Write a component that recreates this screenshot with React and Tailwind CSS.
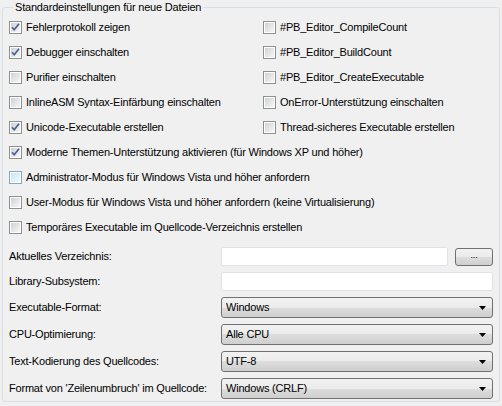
import React from 'react';

const TOP_ROWS = [
  [{ label: 'Fehlerprotokoll zeigen', checked: true }, { label: '#PB_Editor_CompileCount' }],
  [{ label: 'Debugger einschalten', checked: true }, { label: '#PB_Editor_BuildCount' }],
  [{ label: 'Purifier einschalten' }, { label: '#PB_Editor_CreateExecutable' }],
  [{ label: 'InlineASM Syntax-Einfärbung einschalten' }, { label: 'OnError-Unterstützung einschalten' }],
  [{ label: 'Unicode-Executable erstellen', checked: true }, { label: 'Thread-sicheres Executable erstellen' }],
];

const WIDE_ROWS = [
  { label: 'Moderne Themen-Unterstützung aktivieren (für Windows XP und höher)', checked: true },
  { label: 'Administrator-Modus für Windows Vista und höher anfordern', hover: true },
  { label: 'User-Modus für Windows Vista und höher anfordern (keine Virtualisierung)' },
  { label: 'Temporäres Executable im Quellcode-Verzeichnis erstellen' },
];

const COMBOS = [
  { label: 'Executable-Format:', value: 'Windows' },
  { label: 'CPU-Optimierung:', value: 'Alle CPU' },
  { label: 'Text-Kodierung des Quellcodes:', value: 'UTF-8' },
  { label: "Format von 'Zeilenumbruch' im Quellcode:", value: 'Windows (CRLF)' },
];

function CheckBox({ checked, hover }) {
  return (
    <svg width="13" height="13" viewBox="0 0 13 13" className="shrink-0">
      <defs>
        <linearGradient id="cbFill" x1="0" y1="0" x2="1" y2="1">
          <stop offset="0" stopColor="#cfd1d4" />
          <stop offset="1" stopColor="#f7f7f7" />
        </linearGradient>
        <linearGradient id="cbHover" x1="0" y1="0" x2="1" y2="1">
          <stop offset="0" stopColor="#c9e3f3" />
          <stop offset="1" stopColor="#f2f9fd" />
        </linearGradient>
      </defs>
      <rect x="0.5" y="0.5" width="12" height="12" fill="#fff" stroke={hover ? '#86a7c4' : '#8e8f8f'} />
      <rect x="2" y="2" width="9" height="9" fill={hover ? 'url(#cbHover)' : 'url(#cbFill)'} />
      {checked && (
        <path d="M3 6.2 L5.2 8.8 L10 2.8" fill="none" stroke="#4a5f96" strokeWidth="1.7" strokeLinejoin="round" />
      )}
    </svg>
  );
}

function Check({ label, checked, hover }) {
  return (
    <div className="h-[25px] flex items-center gap-[4px] whitespace-nowrap">
      <CheckBox checked={checked} hover={hover} />
      <span>{label}</span>
    </div>
  );
}

function Combo({ value }) {
  return (
    <div className="h-[21px] flex-1 flex items-center justify-between pl-[4px] pr-[6px] rounded-[3px] border border-[#707070] bg-[linear-gradient(#f2f2f2_0%,#ebebeb_50%,#dddddd_50%,#cfcfcf_100%)]">
      <span>{value}</span>
      <svg width="7" height="4" viewBox="0 0 7 4">
        <polygon points="0,0 7,0 3.5,4" fill="#000" />
      </svg>
    </div>
  );
}

export default function App() {
  return (
    <div className="w-[502px] h-[406px] bg-[#f0f0f0] px-[2px] pb-[4px] text-[11px] tracking-[-0.2px] text-black font-['Liberation_Sans',Arial,sans-serif] overflow-hidden">
      <fieldset className="h-full border border-[#d5dfe5] rounded-[3px] pl-[6px] pr-[6px]">
        <legend className="ml-[4px] px-[2px] leading-[14px]">Standardeinstellungen für neue Dateien</legend>

        <div className="pt-[1px]">
          {/* two-column options */}
          {TOP_ROWS.map(([left, right], i) => (
            <div key={i} className="grid grid-cols-[254px_1fr]">
              <Check {...left} />
              <Check {...right} />
            </div>
          ))}

          {/* full-width options */}
          {WIDE_ROWS.map((row) => (
            <Check key={row.label} {...row} />
          ))}
        </div>

        {/* paths and formats */}
        <div className="mt-[7px] flex flex-col gap-[6px]">
          <div className="flex items-center">
            <span className="w-[212px] shrink-0">Aktuelles Verzeichnis:</span>
            <div className="h-[19px] flex-1 bg-white border border-[#dfe3e8] rounded-[2px]" />
            <button className="ml-[7px] w-[38px] h-[18px] rounded-[3px] border border-[#707070] bg-[linear-gradient(#f2f2f2_0%,#ebebeb_50%,#dddddd_50%,#cfcfcf_100%)] text-[9px] leading-none pb-[2px]">
              ...
            </button>
          </div>
          <div className="flex items-center">
            <span className="w-[212px] shrink-0">Library-Subsystem:</span>
            <div className="h-[19px] flex-1 bg-white border border-[#dfe3e8] rounded-[2px]" />
          </div>
          {COMBOS.map((c) => (
            <div key={c.label} className="flex items-center">
              <span className="w-[212px] shrink-0">{c.label}</span>
              <Combo value={c.value} />
            </div>
          ))}
        </div>
      </fieldset>
    </div>
  );
}
